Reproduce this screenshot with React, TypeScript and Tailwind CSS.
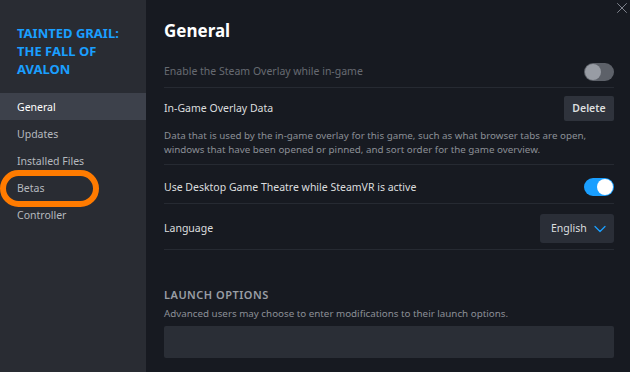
import { ChevronDown, X } from "lucide-react";

const navItems = ["General", "Updates", "Installed Files", "Betas", "Controller"];

function Toggle({ on }: { on: boolean }) {
    return (
        <div
            className={`w-[30px] h-[18px] rounded-full flex items-center px-[1px] ${
                on ? "bg-[#1a9fff] justify-end" : "bg-[#5d6169] justify-start"
            }`}
        >
            <div className={`w-[16px] h-[16px] rounded-full ${on ? "bg-white" : "bg-[#989ca4]"}`}></div>
        </div>
    );
}

export default function App() {
    return (
        <div
            className="w-[630px] h-[372px] flex bg-[#171a21] overflow-hidden relative"
            style={{ fontFamily: '"Noto Sans", "Open Sans", sans-serif' }}
        >
            {/* Sidebar */}
            <div className="w-[146px] h-full bg-[#292c33] relative shrink-0">
                <div className="pt-[24px] pl-[17px] pr-[8px] text-[13px] font-bold leading-[18px] text-[#1a9fff]">
                    TAINTED GRAIL:
                    <br />
                    THE FALL OF
                    <br />
                    AVALON
                </div>
                <div className="mt-[15px] flex flex-col">
                    {navItems.map((item) => (
                        <div
                            key={item}
                            className={`h-[27px] flex items-center pl-[17px] pt-[2px] text-[10.5px] ${
                                item === "General" ? "bg-[#3d414b] text-white" : "text-[#b5b9bf]"
                            }`}
                        >
                            {item}
                        </div>
                    ))}
                </div>
                {/* highlight annotation */}
                <div className="absolute left-[0px] top-[170px] w-[99px] h-[37px] rounded-full border-[6px] border-[#ff7b00]"></div>
            </div>

            {/* Main */}
            <div className="flex-1 pl-[18px] pr-[16px] pt-[20px] relative">
                <X className="absolute right-[-1px] top-[-1px] w-[18px] h-[18px] text-[#8a8f98]" strokeWidth={1.2} />
                <div className="text-[17px] font-bold leading-[22px] text-white">General</div>

                <div className="mt-[14px] h-[32px] flex items-center justify-between border-b border-[#262a32]">
                    <span className="text-[10.5px] text-[#676b72]">Enable the Steam Overlay while in-game</span>
                    <Toggle on={false} />
                </div>

                <div className="pt-[8px] pb-[7px] border-b border-[#262a32]">
                    <div className="flex items-center justify-between h-[25px]">
                        <span className="text-[10.5px] text-[#dcdedf]">In-Game Overlay Data</span>
                        <div className="w-[50px] h-[25px] bg-[#2f333c] rounded-[2px] flex items-center justify-center text-[10.5px] font-semibold text-[#dcdedf]">
                            Delete
                        </div>
                    </div>
                    <div className="mt-[8px] text-[9.8px] leading-[14px] text-[#8b8f96]">
                        Data that is used by the in-game overlay for this game, such as what browser tabs are open,
                        <br />
                        windows that have been opened or pinned, and sort order for the game overview.
                    </div>
                </div>

                <div className="pt-[13px] pb-[7px] flex items-center justify-between border-b border-[#262a32]">
                    <span className="text-[10.5px] leading-[18px] text-[#dcdedf]">Use Desktop Game Theatre while SteamVR is active</span>
                    <Toggle on={true} />
                </div>

                <div className="pt-[10px] pb-[6px] flex items-center justify-between border-b border-[#262a32]">
                    <span className="text-[10.5px] text-[#dcdedf]">Language</span>
                    <div className="w-[74px] h-[29px] bg-[#2a2e37] rounded-[3px] flex items-center pl-[11px] gap-[3px]">
                        <span className="text-[10.5px] text-[#dcdedf]">English</span>
                        <ChevronDown className="w-[20px] h-[20px] text-[#1a9fff]" strokeWidth={1.5} />
                    </div>
                </div>

                <div className="mt-[38px] text-[11px] font-semibold tracking-[0.5px] text-[#9a9ea5] leading-[14px]">
                    LAUNCH OPTIONS
                </div>
                <div className="mt-[5px] text-[9.8px] leading-[14px] text-[#8b8f96]">
                    Advanced users may choose to enter modifications to their launch options.
                </div>
                <div className="mt-[5px] h-[32px] bg-[#2a2e36] rounded-[2px]"></div>
            </div>
        </div>
    );
}
